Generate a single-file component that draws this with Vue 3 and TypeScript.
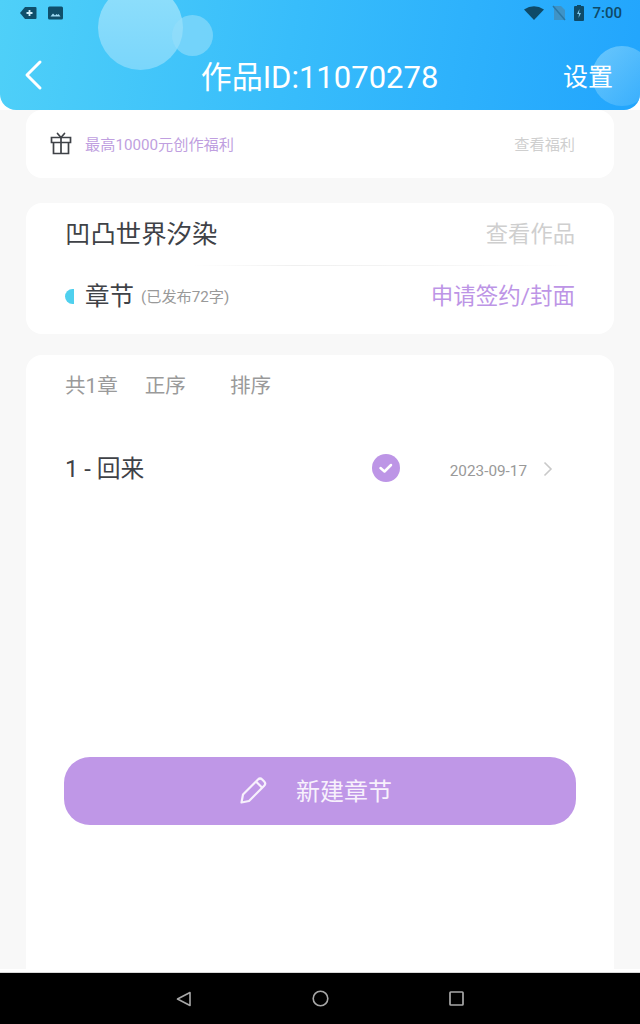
<script setup lang="ts">
const title = '作品ID:11070278'
</script>

<template>
  <div class="page">
    <div class="head-wrap">
      <header class="header">
        <span class="bubble big"></span>
        <span class="bubble small"></span>
        <span class="bubble right"></span>
        <div class="status">
          <div class="status-left">
            <svg width="17" height="14" viewBox="0 0 17 14"><path fill="#0f4f6b" d="M5 1h10.5a1 1 0 0 1 1 1v10a1 1 0 0 1-1 1H5L0 7z"/><path stroke="#cfeffc" stroke-width="1.8" d="M6.5 7h6M9.500 4v6"/></svg>
            <svg width="15" height="14" viewBox="0 0 15 14"><rect x="0" y="0.500" width="15" height="13" rx="1.500" fill="#0f4f6b"/><path fill="#9fdcf5" d="M2.500 10.500l2.500-3 2 2 1.500-1.500 1 1 1-1 2 2.500z"/></svg>
          </div>
          <div class="status-right">
            <svg class="wifi" width="20" height="14" viewBox="0 0 20 14"><path fill="#0e4a68" d="M0 3.500Q10-3 20 3.500L10 14z"/></svg>
            <svg class="sim" width="14" height="16" viewBox="0 0 14 16"><path fill="#3f93c6" d="M3 1h6l4 4v10H2V2a1 1 0 0 1 1-1z"/><path stroke="#2a78a6" stroke-width="1.500" d="M1 1l12 14"/></svg>
            <svg class="battery" width="10" height="16" viewBox="0 0 10 16"><path fill="#0e4a68" d="M3 1V0h4v1h2a1 1 0 0 1 1 1v13a1 1 0 0 1-1 1H1a1 1 0 0 1-1-1V2a1 1 0 0 1 1-1z"/><path fill="#7fc8ee" d="M5.500 4L3 9h2l-.5 4L7 8H5z"/></svg>
            <span class="clock">7:00</span>
          </div>
        </div>
        <div class="nav">
          <svg class="back" width="20" height="32" viewBox="0 0 20 32"><path fill="none" stroke="#fff" stroke-width="3" stroke-linecap="round" stroke-linejoin="round" d="M16 3L3 16l13 13"/></svg>
          <span class="title">{{ title }}</span>
          <span class="settings">设置</span>
        </div>
      </header>
    </div>

    <main class="content">
      <section class="card welfare">
        <div class="welfare-left">
          <svg width="22" height="24" viewBox="0 0 22 24"><g fill="none" stroke="#3f4247" stroke-width="1.700"><path d="M1.500 6.500h19v5h-19zM3.500 11.500v11h15v-11M11 6.500v16"/><path stroke-linecap="round" d="M7.500 2.500l3.500 4 3.500-4"/></g></svg>
          <span class="welfare-text">最高10000元创作福利</span>
        </div>
        <span class="welfare-link">查看福利</span>
      </section>

      <section class="card work">
        <div class="work-top">
          <span class="work-name">凹凸世界汐染</span>
          <span class="work-link">查看作品</span>
        </div>
        <div class="divider"></div>
        <div class="work-bottom">
          <div class="chapter-info">
            <span class="half-dot"></span>
            <span class="chapter-label">章节</span>
            <span class="chapter-count">(已发布72字)</span>
          </div>
          <span class="apply">申请签约/封面</span>
        </div>
      </section>

      <section class="card list">
        <div class="filters">
          <span>共1章</span>
          <span class="order">正序</span>
          <span class="sort">排序</span>
        </div>
        <div class="row">
          <span class="row-name">1 - 回来</span>
          <div class="row-right">
            <svg class="check" width="28" height="28" viewBox="0 0 28 28"><circle cx="14" cy="14" r="14" fill="#bd95e6"/><path fill="none" stroke="#fff" stroke-width="2.500" stroke-linecap="round" stroke-linejoin="round" d="M8.500 14l4 3.500 6.500-6.500"/></svg>
            <span class="date">2023-09-17</span>
            <svg class="chev" width="10" height="16" viewBox="0 0 10 16"><path fill="none" stroke="#c9c9c9" stroke-width="1.600" d="M1.500 1.500L8 8l-6.500 6.500"/></svg>
          </div>
        </div>
        <button class="create">
          <svg class="pen" width="30" height="30" viewBox="0 0 30 30"><g fill="none" stroke="#f7f1fc" stroke-width="2.200" stroke-linejoin="round"><path d="M3.500 27.500l1.500-8L20 4.500a3 3 0 0 1 4.200 0l2 2a3 3 0 0 1 0 4.200L11 26z"/><path d="M18 6.500l6 6"/></g></svg>
          <span class="create-label">新建章节</span>
        </button>
      </section>
    </main>

    <footer class="navbar">
      <svg width="16" height="16" viewBox="0 0 16 16"><path fill="none" stroke="#a8a8a8" stroke-width="1.600" stroke-linejoin="round" d="M14 1.500v13L1.500 8z"/></svg>
      <svg width="17" height="17" viewBox="0 0 17 17"><circle cx="8.500" cy="8.500" r="7.300" fill="none" stroke="#a8a8a8" stroke-width="1.600"/></svg>
      <svg width="15" height="15" viewBox="0 0 15 15"><rect x="1" y="1" width="13" height="13" rx="0.800" fill="none" stroke="#a8a8a8" stroke-width="1.700"/></svg>
    </footer>
  </div>
</template>

<style scoped>
.page {
  width: 640px;
  height: 1024px;
  display: flex;
  flex-direction: column;
  overflow: hidden;
  background: #f8f8f8;
  font-family: "Roboto", "Noto Sans CJK SC", sans-serif;
}
.head-wrap {
  flex: none;
  background: #fff;
}
.header {
  position: relative;
  height: 110px;
  box-sizing: border-box;
  overflow: hidden;
  border-radius: 0 0 16px 16px;
  background: linear-gradient(100deg, #4fd0f8 0%, #38bdfb 45%, #22a5fd 100%);
}
.bubble {
  position: absolute;
  border-radius: 50%;
}
.bubble.big {
  left: 98px;
  top: -15px;
  width: 85px;
  height: 85px;
  background: linear-gradient(180deg, #90dffb 0%, #7ad6fb 100%);
}
.bubble.small {
  left: 172px;
  top: 15px;
  width: 41px;
  height: 41px;
  background: rgba(150, 222, 250, 0.6);
}
.bubble.right {
  left: 592px;
  top: 46px;
  width: 60px;
  height: 60px;
  background: linear-gradient(135deg, rgba(135, 212, 252, 0.7), rgba(70, 180, 253, 0.5));
}
.status {
  position: relative;
  height: 26px;
  display: flex;
  align-items: center;
  justify-content: space-between;
  padding: 0 18px 0 20px;
}
.status-left {
  display: flex;
  align-items: center;
  gap: 11px;
}
.status-right {
  display: flex;
  align-items: center;
  gap: 8px;
}
.clock {
  font-size: 15px;
  font-weight: 500;
  color: #0e4a68;
}
.nav {
  position: relative;
  height: 60px;
  margin-top: 19px;
  display: flex;
  align-items: center;
  justify-content: space-between;
  padding: 0 27px 0 24px;
  color: #fff;
}
.back {
  flex: none;
}
.title {
  font-size: 31px;
  margin-left: 32px;
  margin-bottom: 2px;
}
.settings {
  font-size: 25px;
}
.content {
  flex: 1;
  min-height: 0;
  display: flex;
  flex-direction: column;
  padding: 0 26px;
  border-bottom: 3px solid #fff;
}
.card {
  background: #fff;
  border-radius: 16px;
}
.welfare {
  height: 68px;
  display: flex;
  align-items: center;
  justify-content: space-between;
  padding: 0 39px 2px 24px;
  box-sizing: border-box;
}
.welfare-left {
  display: flex;
  align-items: center;
  gap: 13px;
}
.welfare-text {
  font-size: 15.2px;
  color: #c09fe0;
}
.welfare-link {
  font-size: 15.200px;
  color: #cfcfcf;
}
.work {
  margin-top: 25px;
  height: 131px;
  padding: 0 39px;
  box-sizing: border-box;
}
.work-top {
  height: 62px;
  padding-bottom: 4px;
  box-sizing: border-box;
  display: flex;
  align-items: center;
  justify-content: space-between;
}
.work-name {
  font-size: 25.400px;
  color: #3f4247;
}
.work-link {
  font-size: 22.300px;
  color: #cfcfcf;
}
.divider {
  height: 1px;
  background: linear-gradient(90deg, #fff 25%, #f0f0f0 45%, #f6f6f6 75%, #fff 100%);
}
.work-bottom {
  height: 60px;
  padding-bottom: 4px;
  box-sizing: border-box;
  display: flex;
  align-items: center;
  justify-content: space-between;
}
.chapter-info {
  display: flex;
  align-items: center;
}
.half-dot {
  width: 9px;
  height: 15px;
  border-radius: 9px 0 0 9px;
  background: #4fd0ee;
  margin-right: 11px;
  margin-top: 4px;
}
.chapter-label {
  font-size: 24.500px;
  color: #3f4247;
  margin-right: 7px;
}
.chapter-count {
  font-size: 15.200px;
  color: #999;
  margin-top: 1px;
}
.apply {
  font-size: 22.500px;
  color: #bd95e6;
}
.list {
  margin-top: 21px;
  flex: 1;
  min-height: 0;
  padding: 0 38px 0 39px;
  display: flex;
  flex-direction: column;
  border-radius: 16px 16px 0 0;
}
.filters {
  height: 60px;
  padding-bottom: 2px;
  box-sizing: border-box;
  display: flex;
  align-items: center;
  font-size: 20.600px;
  color: #9a9a9a;
}
.order {
  margin-left: 27px;
}
.sort {
  margin-left: 44px;
}
.row {
  margin-top: 23px;
  height: 60px;
  display: flex;
  align-items: center;
  justify-content: space-between;
}
.row-name {
  font-size: 23.800px;
  color: #3f4247;
  margin-bottom: 3px;
}
.row-right {
  display: flex;
  align-items: center;
  margin-right: 23px;
}
.check {
  margin-right: -2px;
  transform: translateX(-2px);
}
.date {
  font-size: 15.300px;
  color: #999;
  margin-left: 50px;
  margin-right: 16px;
  margin-top: 6px;
}
.chev {
  margin-top: 2px;
}
.create {
  margin-top: 259px;
  margin-left: -1px;
  height: 68px;
  flex: none;
  border: none;
  border-radius: 26px;
  background: #bf97e7;
  color: #f7f1fc;
  font-family: inherit;
  font-size: 24px;
  display: flex;
  align-items: center;
  justify-content: center;
  gap: 28px;
  padding: 0 10px 0 0;
}
.pen {
  margin-bottom: 2px;
}
.create-label {
  margin-bottom: 4px;
}
.navbar {
  flex: none;
  height: 52px;
  box-sizing: border-box;
  border-top: 1px solid #d8d8d8;
  background: #000;
  display: flex;
  align-items: center;
  padding: 0 176px;
  justify-content: space-between;
}
</style>

<style>
html,
body {
  margin: 0;
  background: #f8f8f8;
}
</style>
